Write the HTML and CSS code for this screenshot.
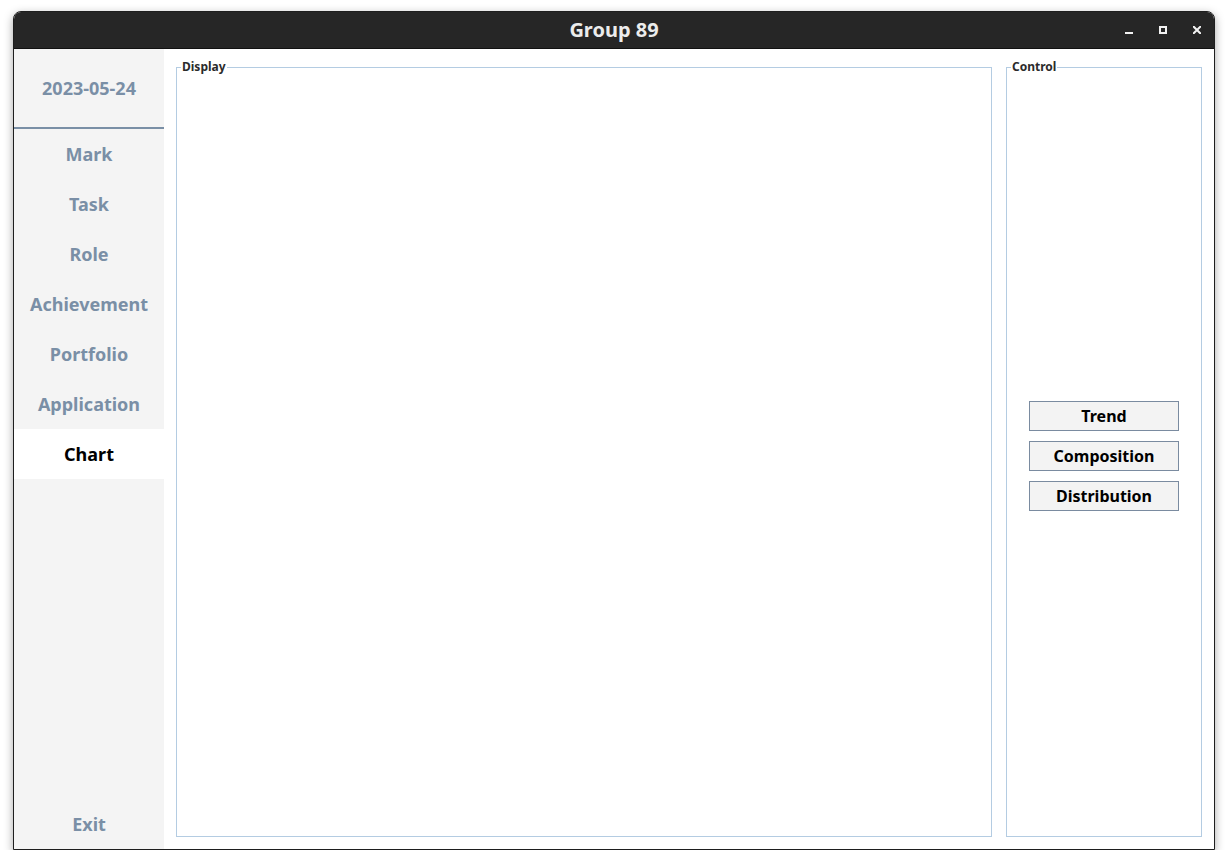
FILE: index.html
```html
<!DOCTYPE html>
<html lang="en">
<head>
<meta charset="utf-8">
<title>Group 89</title>
<link rel="stylesheet" href="styles.css">
</head>
<body>
<div class="window">
  <header class="titlebar">
    <div class="title">Group 89</div>
    <div class="controls">
      <span class="ctl"><svg width="8" height="8" viewBox="0 0 8 8"><rect x="0" y="6" width="8" height="2" fill="#f2f2f2"/></svg></span>
      <span class="ctl"><svg width="8" height="8" viewBox="0 0 8 8"><rect x="1" y="1" width="6" height="6" fill="none" stroke="#f2f2f2" stroke-width="2"/></svg></span>
      <span class="ctl"><svg width="8" height="8" viewBox="0 0 8 8"><path d="M0.8 0.8 L7.2 7.2 M7.2 0.8 L0.8 7.2" stroke="#f2f2f2" stroke-width="2" stroke-linecap="square"/></svg></span>
    </div>
  </header>
  <div class="body">
    <nav class="sidebar">
      <div class="date">2023-05-24</div>
      <div class="nav-item">Mark</div>
      <div class="nav-item">Task</div>
      <div class="nav-item">Role</div>
      <div class="nav-item">Achievement</div>
      <div class="nav-item">Portfolio</div>
      <div class="nav-item">Application</div>
      <div class="nav-item active">Chart</div>
      <div class="nav-item exit">Exit</div>
    </nav>
    <main class="main">
      <fieldset class="panel display">
        <legend>Display</legend>
      </fieldset>
      <fieldset class="panel control">
        <legend>Control</legend>
        <div class="buttons">
          <button class="btn">Trend</button>
          <button class="btn">Composition</button>
          <button class="btn">Distribution</button>
        </div>
      </fieldset>
    </main>
  </div>
</div>
</body>
</html>
```

FILE: styles.css
```css
* { box-sizing: border-box; }
html, body { margin: 0; padding: 0; background: #ffffff; }
body {
  padding: 11px 0 0 13px;
  font-family: "Noto Sans", "Open Sans", "DejaVu Sans", sans-serif;
}
.window {
  width: 1202px;
  height: 839px;
  border: 1px solid #1e1e1e;
  border-radius: 8px 8px 0 0;
  background: #ffffff;
  box-shadow: 0 3px 10px rgba(0,0,0,0.35);
  display: flex;
  flex-direction: column;
  overflow: hidden;
}
.titlebar {
  height: 37px;
  flex: none;
  background: #262626;
  border-bottom: 1px solid #111;
  position: relative;
  display: flex;
  align-items: center;
  justify-content: center;
}
.title {
  color: #ececec;
  font-weight: 700;
  font-size: 20px;
  line-height: 24px;
  padding-top: 0;
}
.controls {
  position: absolute;
  right: 13px;
  top: 14px;
  display: flex;
  gap: 26px;
}
.ctl { width: 8px; height: 8px; display: block; }
.ctl svg { display: block; }
.body {
  flex: 1;
  display: flex;
  min-height: 0;
}
.sidebar {
  width: 150px;
  flex: none;
  background: #f4f4f4;
  display: flex;
  flex-direction: column;
}
.date {
  height: 80px;
  border-bottom: 2px solid #7a8fa6;
  display: flex;
  align-items: center;
  justify-content: center;
  color: #7a8fa6;
  font-weight: 700;
  font-size: 18px;
}
.nav-item {
  height: 50px;
  display: flex;
  align-items: center;
  justify-content: center;
  color: #7a8fa6;
  font-weight: 700;
  font-size: 18px;
}
.nav-item.active {
  background: #ffffff;
  color: #000000;
}
.nav-item.exit { margin-top: auto; }
.main {
  flex: 1;
  display: flex;
  gap: 14px;
  padding: 10px 12px 12px 12px;
}
.panel {
  margin: 0;
  padding: 0;
  min-width: 0;
  border: 1px solid #b4cce2;
}
.panel legend {
  margin-left: 4px;
  padding: 0 1px;
  font-size: 12px;
  line-height: 16px;
  font-weight: 700;
  color: #2b2b2b;
}
.display { width: 816px; flex: none; }
.control {
  flex: 1;
  display: flex;
  flex-direction: column;
  justify-content: center;
  align-items: center;
}
.buttons {
  display: flex;
  flex-direction: column;
  gap: 10px;
}
.btn {
  width: 150px;
  height: 30px;
  background: #f3f3f3;
  border: 1px solid #7a8ba0;
  border-radius: 0;
  font-family: "Noto Sans", "Open Sans", sans-serif;
  font-weight: 700;
  font-size: 16px;
  color: #000;
  padding: 0;
  line-height: 28px;
}
```
